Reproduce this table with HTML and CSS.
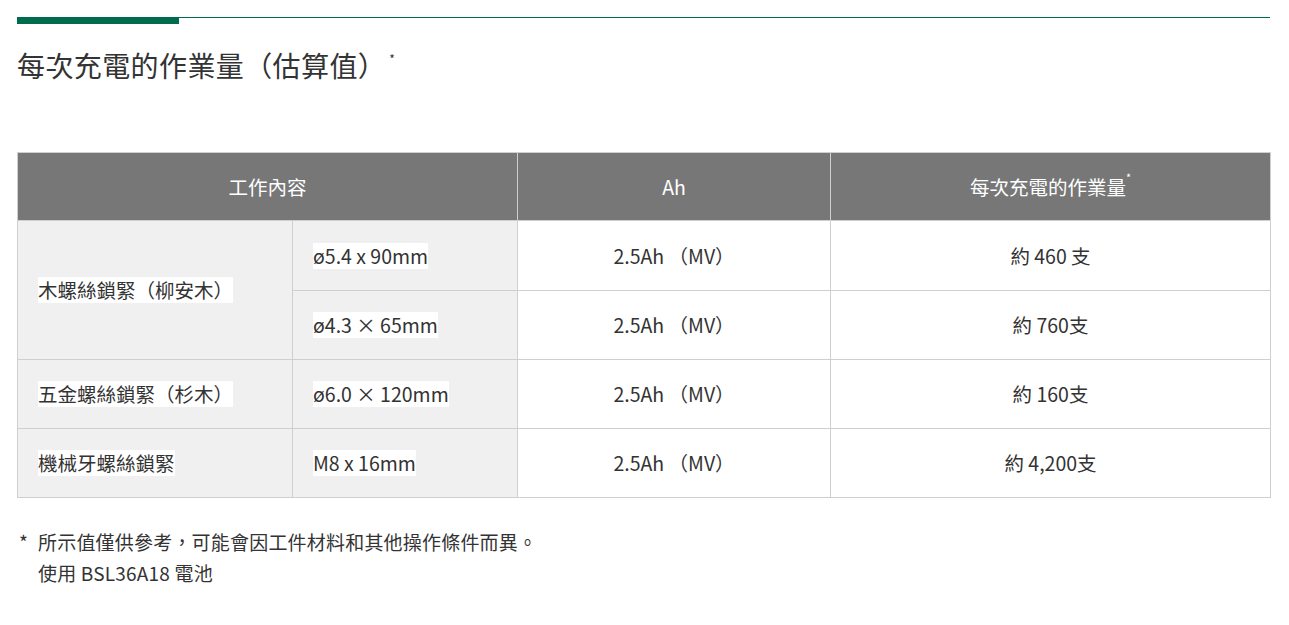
FILE: index.html
```html
<!DOCTYPE html>
<html lang="zh-Hant">
<head>
<meta charset="utf-8">
<title>每次充電的作業量</title>
<link rel="stylesheet" href="styles.css">
</head>
<body>
<div class="page">
  <div class="rule"><span class="rule-accent"></span></div>
  <h2 class="title">每次充電的作業量（估算值）<sup class="mark">*</sup></h2>

  <table class="spec">
    <colgroup>
      <col class="w1">
      <col class="w2">
      <col class="w3">
      <col class="w4">
    </colgroup>
    <thead>
      <tr>
        <th colspan="2">工作內容</th>
        <th>Ah</th>
        <th>每次充電的作業量<sup class="hmark">*</sup></th>
      </tr>
    </thead>
    <tbody>
      <tr class="first">
        <td rowspan="2" class="grey"><span class="hl">木螺絲鎖緊（柳安木）</span></td>
        <td class="grey"><span class="hl">ø5.4 x 90mm</span></td>
        <td class="center">2.5Ah （MV）</td>
        <td class="center">約 460 支</td>
      </tr>
      <tr>
        <td class="grey"><span class="hl">ø4.3 × 65mm</span></td>
        <td class="center">2.5Ah （MV）</td>
        <td class="center">約 760支</td>
      </tr>
      <tr>
        <td class="grey"><span class="hl">五金螺絲鎖緊（杉木）</span></td>
        <td class="grey"><span class="hl">ø6.0 × 120mm</span></td>
        <td class="center">2.5Ah （MV）</td>
        <td class="center">約 160支</td>
      </tr>
      <tr>
        <td class="grey"><span class="hl">機械牙螺絲鎖緊</span></td>
        <td class="grey"><span class="hl">M8 x 16mm</span></td>
        <td class="center">2.5Ah （MV）</td>
        <td class="center">約 4,200支</td>
      </tr>
    </tbody>
  </table>

  <div class="notes">
    <span class="star">*</span>
    <div class="note-text">
      <p>所示值僅供參考，可能會因工件材料和其他操作條件而異。</p>
      <p>使用 BSL36A18 電池</p>
    </div>
  </div>
</div>
</body>
</html>
```

FILE: styles.css
```css
* { box-sizing: border-box; }

html, body {
  margin: 0;
  padding: 0;
  background: #fff;
}

body {
  font-family: "Noto Sans CJK TC", "Noto Sans", sans-serif;
  color: #333;
}

.page {
  width: 1253px;
  margin: 0 0 0 17px;
  padding-top: 17px;
}

.rule {
  height: 7px;
  border-top: 1px solid #006c4f;
}

.rule-accent {
  display: block;
  width: 162px;
  height: 6px;
  background: #006c4f;
}

.title {
  margin: 19px 0 0;
  font-size: 28px;
  font-weight: 400;
  line-height: 44px;
  letter-spacing: 0.4px;
  color: #333;
}

.mark {
  font-size: 12px;
  vertical-align: top;
  position: relative;
  top: -6px;
  margin-left: 3px;
}

.spec {
  margin-top: 65px;
  width: 100%;
  border-collapse: collapse;
  table-layout: fixed;
  font-size: 19.5px;
}

.w1 { width: 275px; }
.w2 { width: 225px; }
.w3 { width: 313px; }
.w4 { width: 440px; }

.spec th,
.spec td {
  border: 1px solid #cfcfcf;
  line-height: 26px;
  font-weight: 400;
}

.spec th {
  background: #777;
  color: #fff;
  padding: 21px 10px 20px;
  text-align: center;
  height: 68px;
}

.hmark {
  font-size: 11px;
  vertical-align: top;
  position: relative;
  top: -10px;
}

.spec td {
  padding: 21px 20px;
  height: 69px;
}

.spec .first td {
  height: 70px;
}

.grey {
  background: #f0f0f0;
  text-align: left;
}

.hl {
  display: inline-block;
  background: #fff;
  line-height: 26px;
}

.center {
  text-align: center;
  background: #fff;
}

.notes {
  display: flex;
  margin-top: 28px;
  font-size: 19px;
  letter-spacing: 0.2px;
  line-height: 31px;
}

.star {
  width: 21px;
  padding-left: 2px;
}

.note-text p {
  margin: 0;
}
```
